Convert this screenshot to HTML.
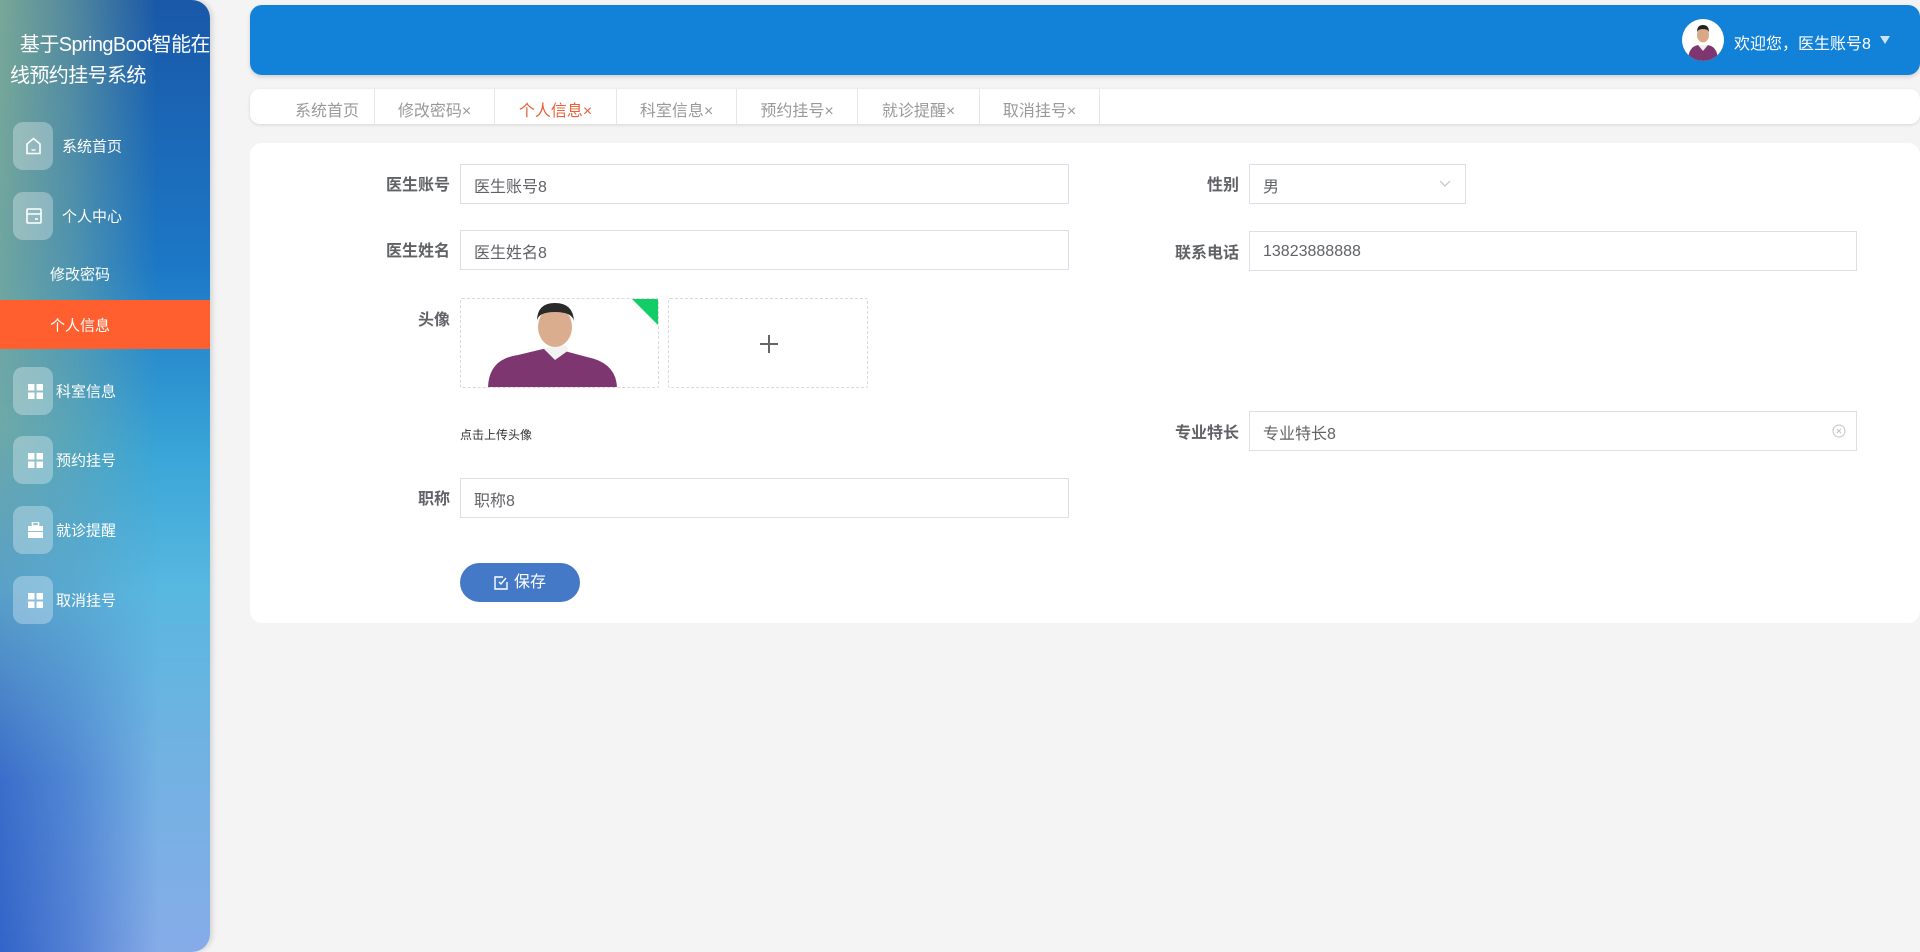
<!DOCTYPE html>
<html><head><meta charset="utf-8">
<style>
*{margin:0;padding:0;box-sizing:border-box}
body{width:1920px;height:952px;background:#f4f4f4;font-family:"Liberation Sans","Noto Sans CJK SC",sans-serif;position:relative;overflow:hidden}
.side{position:absolute;left:0;top:0;width:210px;height:952px;border-radius:0 18px 18px 0;
background:linear-gradient(to bottom,#1a58a8 0%,#1c78c6 28%,#3aa6d8 48%,#58b8e0 62%,#70b2e2 78%,#86ace8 100%);overflow:hidden;box-shadow:2px 0 6px rgba(0,0,0,.15)}
.ov{position:absolute;left:0;top:0;width:210px;height:952px;
background:linear-gradient(to bottom,rgba(125,172,150,.95) 0%,rgba(120,170,160,.85) 45%,rgba(90,150,190,.7) 62%,rgba(55,105,200,.95) 82%,rgba(50,100,200,1) 100%);
-webkit-mask-image:linear-gradient(to right,#000 0%,rgba(0,0,0,.6) 35%,rgba(0,0,0,0) 75%);mask-image:linear-gradient(to right,#000 0%,rgba(0,0,0,.6) 35%,rgba(0,0,0,0) 75%)}
.title{position:absolute;left:10px;top:30px;width:220px;color:#fff;font-size:20px;line-height:31px;letter-spacing:-0.6px}
.mi{position:absolute;left:0;width:210px;color:#fff;font-size:15px}
.ib{position:absolute;left:13px;width:40px;height:48px;border-radius:10px;background:rgba(255,255,255,.3)}
.mi span{position:absolute;top:50%;transform:translateY(-50%);left:56px}
.active{position:absolute;left:0;top:300px;width:210px;height:49px;background:#ff5f2f}
.head{position:absolute;left:250px;top:5px;width:1670px;height:70px;background:#1282d8;border-radius:12px;box-shadow:0 2px 4px rgba(0,0,0,.15)}
.tabs{position:absolute;left:250px;top:89px;width:1670px;height:35px;background:#fff;border-radius:10px;box-shadow:0 1px 3px rgba(0,0,0,.12)}
.tab{position:absolute;top:0;height:35px;display:flex;align-items:center;justify-content:center;padding-top:5px;font-size:16px;color:#999;border-right:1px solid #e6e6e6}
.card{position:absolute;left:250px;top:143px;width:1670px;height:480px;background:#fff;border-radius:12px}
.lbl{position:absolute;font-size:16px;color:#606266;font-weight:bold;text-align:right;width:120px;height:40px;display:flex;align-items:center;justify-content:flex-end}
.inp{position:absolute;border:1px solid #dcdfe6;height:40px;font-size:16px;color:#606266;display:flex;align-items:center;padding:1px 0 0 13px;background:#fff}
.up{position:absolute;border:1px dashed #d9d9d9;border-radius:2px;background:#fff;overflow:hidden}
</style></head><body>
<div class="side"><div class="ov"></div>
<div class="title">&nbsp;&nbsp;基于SpringBoot智能在<br>线预约挂号系统</div>
<div class="mi" style="top:122px;height:48px"><div class="ib" style="top:0"></div>
<svg style="position:absolute;left:25px;top:15px" width="17" height="18" viewBox="0 0 17 18"><path d="M2 7L8.5 1.5 15 7v9.5H2z" fill="none" stroke="#fff" stroke-width="1.6"/><path d="M6.5 12.5q2 1.5 4 0" fill="none" stroke="#fff" stroke-width="1.4"/></svg>
<span style="left:62px">系统首页</span></div>
<div class="mi" style="top:192px;height:48px"><div class="ib" style="top:0"></div>
<svg style="position:absolute;left:26px;top:16px" width="16" height="16" viewBox="0 0 16 16"><rect x="1" y="1" width="14" height="14" rx="1" fill="none" stroke="#fff" stroke-width="1.6"/><path d="M1 6h14M9 11h3" stroke="#fff" stroke-width="1.6"/></svg>
<span style="left:62px">个人中心</span></div>
<div class="mi" style="top:262px;height:24px"><span style="left:50px">修改密码</span></div>
<div class="active"></div>
<div class="mi" style="top:300px;height:49px"><span style="left:50px">个人信息</span></div>
<div class="mi" style="top:367px;height:48px"><div class="ib" style="top:0"></div><svg style="position:absolute;left:28px;top:17px" width="15" height="15"><rect x="0" y="0" width="6.5" height="6.5" fill="#fff"/><rect x="8.5" y="0" width="6.5" height="6.5" fill="#fff"/><rect x="0" y="8.5" width="6.5" height="6.5" fill="#fff"/><rect x="8.5" y="8.5" width="6.5" height="6.5" fill="#fff"/></svg><span>科室信息</span></div>
<div class="mi" style="top:436px;height:48px"><div class="ib" style="top:0"></div><svg style="position:absolute;left:28px;top:17px" width="15" height="15"><rect x="0" y="0" width="6.5" height="6.5" fill="#fff"/><rect x="8.5" y="0" width="6.5" height="6.5" fill="#fff"/><rect x="0" y="8.5" width="6.5" height="6.5" fill="#fff"/><rect x="8.5" y="8.5" width="6.5" height="6.5" fill="#fff"/></svg><span>预约挂号</span></div>
<div class="mi" style="top:506px;height:48px"><div class="ib" style="top:0"></div><svg style="position:absolute;left:28px;top:16px" width="15" height="16"><rect x="4.5" y="0" width="6" height="4" fill="none" stroke="#fff" stroke-width="1.6"/><rect x="0" y="4" width="15" height="5" fill="#fff"/><rect x="0" y="10" width="15" height="6" fill="#fff"/></svg><span>就诊提醒</span></div>
<div class="mi" style="top:576px;height:48px"><div class="ib" style="top:0"></div><svg style="position:absolute;left:28px;top:17px" width="15" height="15"><rect x="0" y="0" width="6.5" height="6.5" fill="#fff"/><rect x="8.5" y="0" width="6.5" height="6.5" fill="#fff"/><rect x="0" y="8.5" width="6.5" height="6.5" fill="#fff"/><rect x="8.5" y="8.5" width="6.5" height="6.5" fill="#fff"/></svg><span>取消挂号</span></div>
</div>

<div class="head">
<svg style="position:absolute;left:1432px;top:14px" width="42" height="42" viewBox="0 0 42 42"><clipPath id="c1"><circle cx="21" cy="21" r="21"/></clipPath><g clip-path="url(#c1)"><rect width="42" height="42" fill="#fff"/><path d="M6 42q0-14 10-16h10q10 2 10 16z" fill="#7e3670"/><path d="M16 26l5 6 5-6z" fill="#eee"/><ellipse cx="21" cy="16" rx="6" ry="7.5" fill="#d9a987"/><path d="M15 13q0-7 6-7t6 7q-1-3-6-3t-6 3z" fill="#222"/></g></svg>
<div style="position:absolute;left:1484px;top:25px;color:#fff;font-size:16px">欢迎您，医生账号8</div>
<svg style="position:absolute;left:1630px;top:31px" width="10" height="8"><path d="M0 0h10L5 8z" fill="#cfe3f5"/></svg>
</div>

<div class="tabs">
<div class="tab" style="left:0;width:125px;padding-left:30px">系统首页</div>
<div class="tab" style="left:125px;width:120px">修改密码×</div>
<div class="tab" style="left:245px;width:122px;color:#e8613a">个人信息×</div>
<div class="tab" style="left:367px;width:120px">科室信息×</div>
<div class="tab" style="left:487px;width:121px">预约挂号×</div>
<div class="tab" style="left:608px;width:122px">就诊提醒×</div>
<div class="tab" style="left:730px;width:120px">取消挂号×</div>
</div>

<div class="card"></div>
<div class="lbl" style="left:330px;top:163px">医生账号</div>
<div class="inp" style="left:460px;top:164px;width:609px">医生账号8</div>
<div class="lbl" style="left:1119px;top:163px">性别</div>
<div class="inp" style="left:1249px;top:164px;width:217px">男<svg style="position:absolute;right:14px;top:15px" width="12" height="8"><path d="M1 1l5 5 5-5" fill="none" stroke="#c0c4cc" stroke-width="1.2"/></svg></div>
<div class="lbl" style="left:330px;top:229px">医生姓名</div>
<div class="inp" style="left:460px;top:230px;width:609px">医生姓名8</div>
<div class="lbl" style="left:1119px;top:231px">联系电话</div>
<div class="inp" style="left:1249px;top:231px;width:608px">13823888888</div>
<div class="lbl" style="left:330px;top:298px;height:40px">头像</div>
<div class="up" style="left:460px;top:298px;width:199px;height:90px">
<svg style="position:absolute;left:0;top:0" width="199" height="90" viewBox="0 0 199 90"><path d="M27 90q0-30 30-34l25-6h14l30 8q30 6 30 32z" fill="#7e3670"/><path d="M82 49l12 12 14-10-4-5z" fill="#f2f2f2"/><ellipse cx="94" cy="28" rx="17" ry="20" fill="#d9ad8e"/><path d="M76 22q0-18 18-18t19 18q-2-9-19-9t-18 9z" fill="#2a2a2a"/><path d="M171 0h28v28z" fill="#13ce66"/></svg></div>
<div class="up" style="left:668px;top:298px;width:200px;height:90px"><div style="position:absolute;left:91px;top:44px;width:18px;height:1.5px;background:#666"></div><div style="position:absolute;left:99px;top:36px;width:1.5px;height:18px;background:#666"></div></div>
<div style="position:absolute;left:460px;top:426px;font-size:12px;color:#333">点击上传头像</div>
<div class="lbl" style="left:1119px;top:411px">专业特长</div>
<div class="inp" style="left:1249px;top:411px;width:608px">专业特长8<svg style="position:absolute;right:10px;top:12px" width="14" height="14"><circle cx="7" cy="7" r="6" fill="none" stroke="#c0c4cc"/><path d="M5 5l4 4M9 5l-4 4" stroke="#c0c4cc"/></svg></div>
<div class="lbl" style="left:330px;top:477px">职称</div>
<div class="inp" style="left:460px;top:478px;width:609px">职称8</div>
<div style="position:absolute;left:460px;top:563px;width:120px;height:39px;border-radius:20px;background:#4479c8;color:#fff;font-size:16px;line-height:39px;padding-left:34px">
<svg style="position:absolute;left:34px;top:13px" width="14" height="14"><path d="M9 1H1v12h12V6" fill="none" stroke="#fff" stroke-width="1.4"/><path d="M5 6l2 2 5-6" fill="none" stroke="#fff" stroke-width="1.4"/></svg><span style="margin-left:20px">保存</span></div>
</body></html>
